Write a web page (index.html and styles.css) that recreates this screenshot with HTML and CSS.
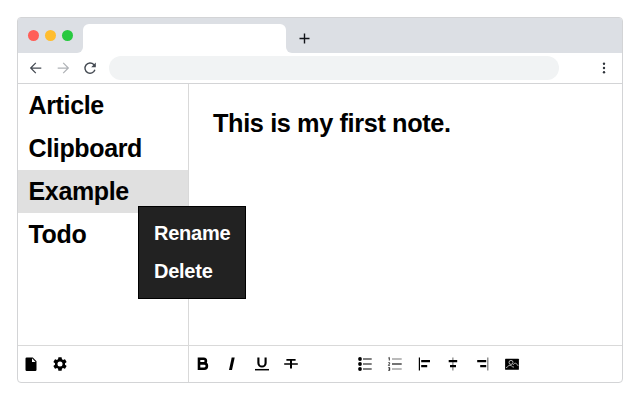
FILE: index.html
```html
<!DOCTYPE html>
<html lang="en">
<head>
<meta charset="utf-8">
<title>Notes</title>
<link rel="stylesheet" href="styles.css">
</head>
<body>
<div class="window">
  <div class="tabstrip">
    <div class="lights"><i class="light red"></i><i class="light amber"></i><i class="light green"></i></div>
    <div class="tab"></div>
    <div class="tabrest">
      <svg class="plus" width="11" height="11" viewBox="0 0 11 11"><path d="M5.5 .5v10M.5 5.5h10" stroke="#111318" stroke-width="1.4"/></svg>
    </div>
  </div>
  <div class="toolbar">
    <svg width="14" height="14" viewBox="0 0 14 14" fill="none" stroke="#444a52" stroke-width="1.25"><path d="M12.3 7H1.7M6.8 1.9L1.7 7l5.1 5.1"/></svg>
    <svg width="14" height="14" viewBox="0 0 14 14" fill="none" stroke="#b0b3b7" stroke-width="1.25"><path d="M1.7 7h10.6M7.2 1.9L12.3 7l-5.1 5.1"/></svg>
    <svg width="14" height="14" viewBox="0 0 14 14" fill="none" stroke="#444a52" stroke-width="1.4"><path d="M11.9 8.7A5.1 5.1 0 1 1 10.8 3.6L12 5"/><path d="M12.8 1.5v4.7H8.2z" fill="#444a52" stroke="none"/></svg>
    <div class="address"></div>
    <svg class="more" width="4" height="12" viewBox="0 0 4 12" fill="#2f343b"><circle cx="2" cy="1.8" r="1.2"/><circle cx="2" cy="6" r="1.2"/><circle cx="2" cy="10.2" r="1.2"/></svg>
  </div>
  <div class="content">
    <div class="sidebar">
      <div class="notes">
        <div class="note">Article</div>
        <div class="note">Clipboard</div>
        <div class="note selected">Example</div>
        <div class="note">Todo</div>
      </div>
      <div class="actions">
        <svg width="14" height="16" viewBox="0 0 14 16"><path d="M2.7 1.4h6.1l3.7 3.8v8.5q0 1.2-1.2 1.2H2.7q-1.2 0-1.2-1.2V2.6q0-1.2 1.2-1.2z"/><path d="M8 2.3v3.6h3.6z" fill="#fff"/></svg>
        <svg width="14" height="14" viewBox="2 2 20 20"><path d="M19.14 12.94c.04-.3.06-.61.06-.94 0-.32-.02-.64-.07-.94l2.03-1.58a.49.49 0 0 0 .12-.61l-1.92-3.32a.49.49 0 0 0-.59-.22l-2.39.96c-.5-.38-1.03-.7-1.62-.94l-.36-2.54a.48.48 0 0 0-.48-.41h-3.84a.47.47 0 0 0-.47.41l-.36 2.54c-.59.24-1.13.57-1.62.94l-2.39-.96a.48.48 0 0 0-.59.22L2.74 8.87a.47.47 0 0 0 .12.61l2.03 1.58c-.05.3-.09.63-.09.94s.02.64.07.94l-2.03 1.58a.49.49 0 0 0-.12.61l1.92 3.32c.12.22.37.29.59.22l2.39-.96c.5.38 1.03.7 1.62.94l.36 2.54c.05.24.24.41.48.41h3.84c.24 0 .44-.17.47-.41l.36-2.54c.59-.24 1.13-.56 1.62-.94l2.39.96c.22.08.47 0 .59-.22l1.92-3.32a.47.47 0 0 0-.12-.61zM12 15.6A3.6 3.6 0 1 1 12 8.4a3.6 3.6 0 0 1 0 7.2z"/></svg>
      </div>
    </div>
    <div class="editor">
      <h1 class="page">This is my first note.</h1>
      <div class="format">
        <svg width="16" height="16" viewBox="0 0 16 16" fill="none" stroke="#000"><path d="M4 2.7h4.7a2.1 2.2 0 0 1 0 4.6H4M4 7.4h5.2a2.6 2.6 0 0 1 0 5.4H4M4 1.5v12.5" stroke-width="2.6"/></svg>
        <svg width="16" height="16" viewBox="0 0 16 16"><path d="M7.7 1.5h3L8 14H5z"/></svg>
        <svg width="16" height="16" viewBox="0 0 16 16" fill="none" stroke="#000"><path d="M4.4 1.5v5.4a3.6 3.6 0 0 0 7.2 0V1.5" stroke-width="2.1"/><path d="M1 13.7h14" stroke-width="1.5"/></svg>
        <svg width="16" height="16" viewBox="0 0 16 16"><path d="M3.4 3h9.2v1.8H9v7.8H7V4.8H3.4zM1.2 7.2h13.6v1.6H1.2z"/></svg>
        <span class="gap"></span>
        <svg width="16" height="16" viewBox="0 0 16 16"><circle cx="3" cy="3" r="1.9"/><circle cx="3" cy="8" r="1.9"/><circle cx="3" cy="13" r="1.9"/><path d="M6 3h8.7M6 8h8.7M6 13h8.7" stroke="#000" stroke-width="1.1"/></svg>
        <svg width="16" height="16" viewBox="0 0 16 16" fill="none" stroke="#000"><path d="M5 3h9.7M5 13h9.7" stroke="#777" stroke-width="1.1"/><path d="M5 8h9.7" stroke-width="1.1"/><path d="M1.4 2l.9-.5v3M1.3 6.7h1.3v1L1.4 9.4h1.4M1.3 11.6h1.4v2.8H1.3M1.5 13h1.2" stroke-width=".8"/></svg>
        <svg width="16" height="16" viewBox="0 0 16 16"><path d="M2.8 1.5H4V14.5H2.8zM5.2 4H14v2.3H5.2zM5.2 9h6v2.2h-6z"/></svg>
        <svg width="16" height="16" viewBox="0 0 16 16"><path d="M7.4 1.5h1v13h-1z" fill="#666"/><path d="M3.7 4h8.5v2.3H3.7zM5 9h6v2.2H5z"/></svg>
        <svg width="16" height="16" viewBox="0 0 16 16"><path d="M12.2 1.5h1.2v13h-1.2z" fill="#777"/><path d="M2.2 4h9v2.3h-9zM5.2 9h6v2.2h-6z"/></svg>
        <svg width="16" height="16" viewBox="0 0 16 16"><rect x="1.1" y="2.7" width="13.8" height="11" rx=".5"/><path d="M2 11.7c1.8-.3 2.2-2.6 4-2.5 2 .1 2.2 2.5 4 1.8M9.2 8.8c1.6-2.6 3.3-1.8 5 1.2" fill="none" stroke="#ddd" stroke-width=".8"/><circle cx="7" cy="6.4" r="2" fill="none" stroke="#ddd" stroke-width=".8"/></svg>
      </div>
    </div>
  </div>
</div>
<div class="menu"><div>Rename</div><div>Delete</div></div>
</body>
</html>
```
FILE: styles.css
```css
* { box-sizing: border-box; }
body {
  margin: 0;
  width: 640px;
  height: 400px;
  padding: 17px;
  background: #fff;
  font-family: "Liberation Sans", Arial, sans-serif;
  font-weight: bold;
  color: #000;
  overflow: hidden;
}
svg { display: block; flex: none; }
.window {
  width: 606px;
  height: 366px;
  display: flex;
  flex-direction: column;
  border: 1px solid #d3d4d6;
  border-radius: 4px;
  overflow: hidden;
}
.tabstrip {
  height: 35px;
  flex: none;
  display: flex;
  background: #fff;
  box-shadow: inset 0 7px #dcdfe4;
}
.lights {
  width: 65px;
  padding: 12px 0 0 10px;
  display: flex;
  gap: 6px;
  background: #dcdfe4;
  border-bottom-right-radius: 6px;
}
.light { width: 11px; height: 11px; border-radius: 50%; }
.red { background: #ff5f58; }
.amber { background: #ffbd2e; }
.green { background: #27c93f; }
.tab {
  width: 203px;
  background: #fff;
  border-radius: 6px 6px 0 0;
  margin-top: 6px;
  box-shadow: 0 -7px 0 7px #dcdfe4;
  clip-path: inset(-6px 0 0 0);
}
.tabrest {
  flex: 1;
  background: #dcdfe4;
  border-bottom-left-radius: 6px;
}
.plus { margin: 15px 0 0 13px; }
.toolbar {
  height: 31px;
  flex: none;
  display: flex;
  align-items: center;
  gap: 13px;
  padding-left: 11px;
  border-bottom: 1px solid #d3d4d6;
}
.address {
  width: 450px;
  height: 24px;
  margin-left: -1px;
  border-radius: 12px;
  background: #f1f3f4;
}
.more { margin-left: 30px; }
.content { flex: 1; display: flex; min-height: 0; }
.sidebar {
  width: 171px;
  display: flex;
  flex-direction: column;
  border-right: 1px solid #d9d9d9;
}
.notes { flex: 1; }
.note {
  height: 43px;
  padding-left: 10.5px;
  font-size: 25px;
  line-height: 42px;
  letter-spacing: -0.35px;
}
.selected { background: #e0e0e0; }
.actions, .format {
  height: 37px;
  flex: none;
  display: flex;
  align-items: center;
  border-top: 1px solid #d9d9d9;
}
.actions { padding-left: 6px; gap: 15px; }
.editor { flex: 1; display: flex; flex-direction: column; }
.page {
  flex: 1;
  margin: 0;
  padding: 24px 0 0 24px;
  font-size: 25.3px;
  line-height: 30px;
  letter-spacing: -0.38px;
}
.format { padding-left: 6px; gap: 13.35px; }
.gap { width: 31.5px; }
.menu {
  position: absolute;
  left: 138px;
  top: 206px;
  width: 108px;
  height: 93px;
  padding: 7px 0 0 15px;
  background: #222;
  border: 1px solid #000;
  color: #fff;
  font-size: 20px;
  line-height: 38px;
  letter-spacing: -0.25px;
}
```
